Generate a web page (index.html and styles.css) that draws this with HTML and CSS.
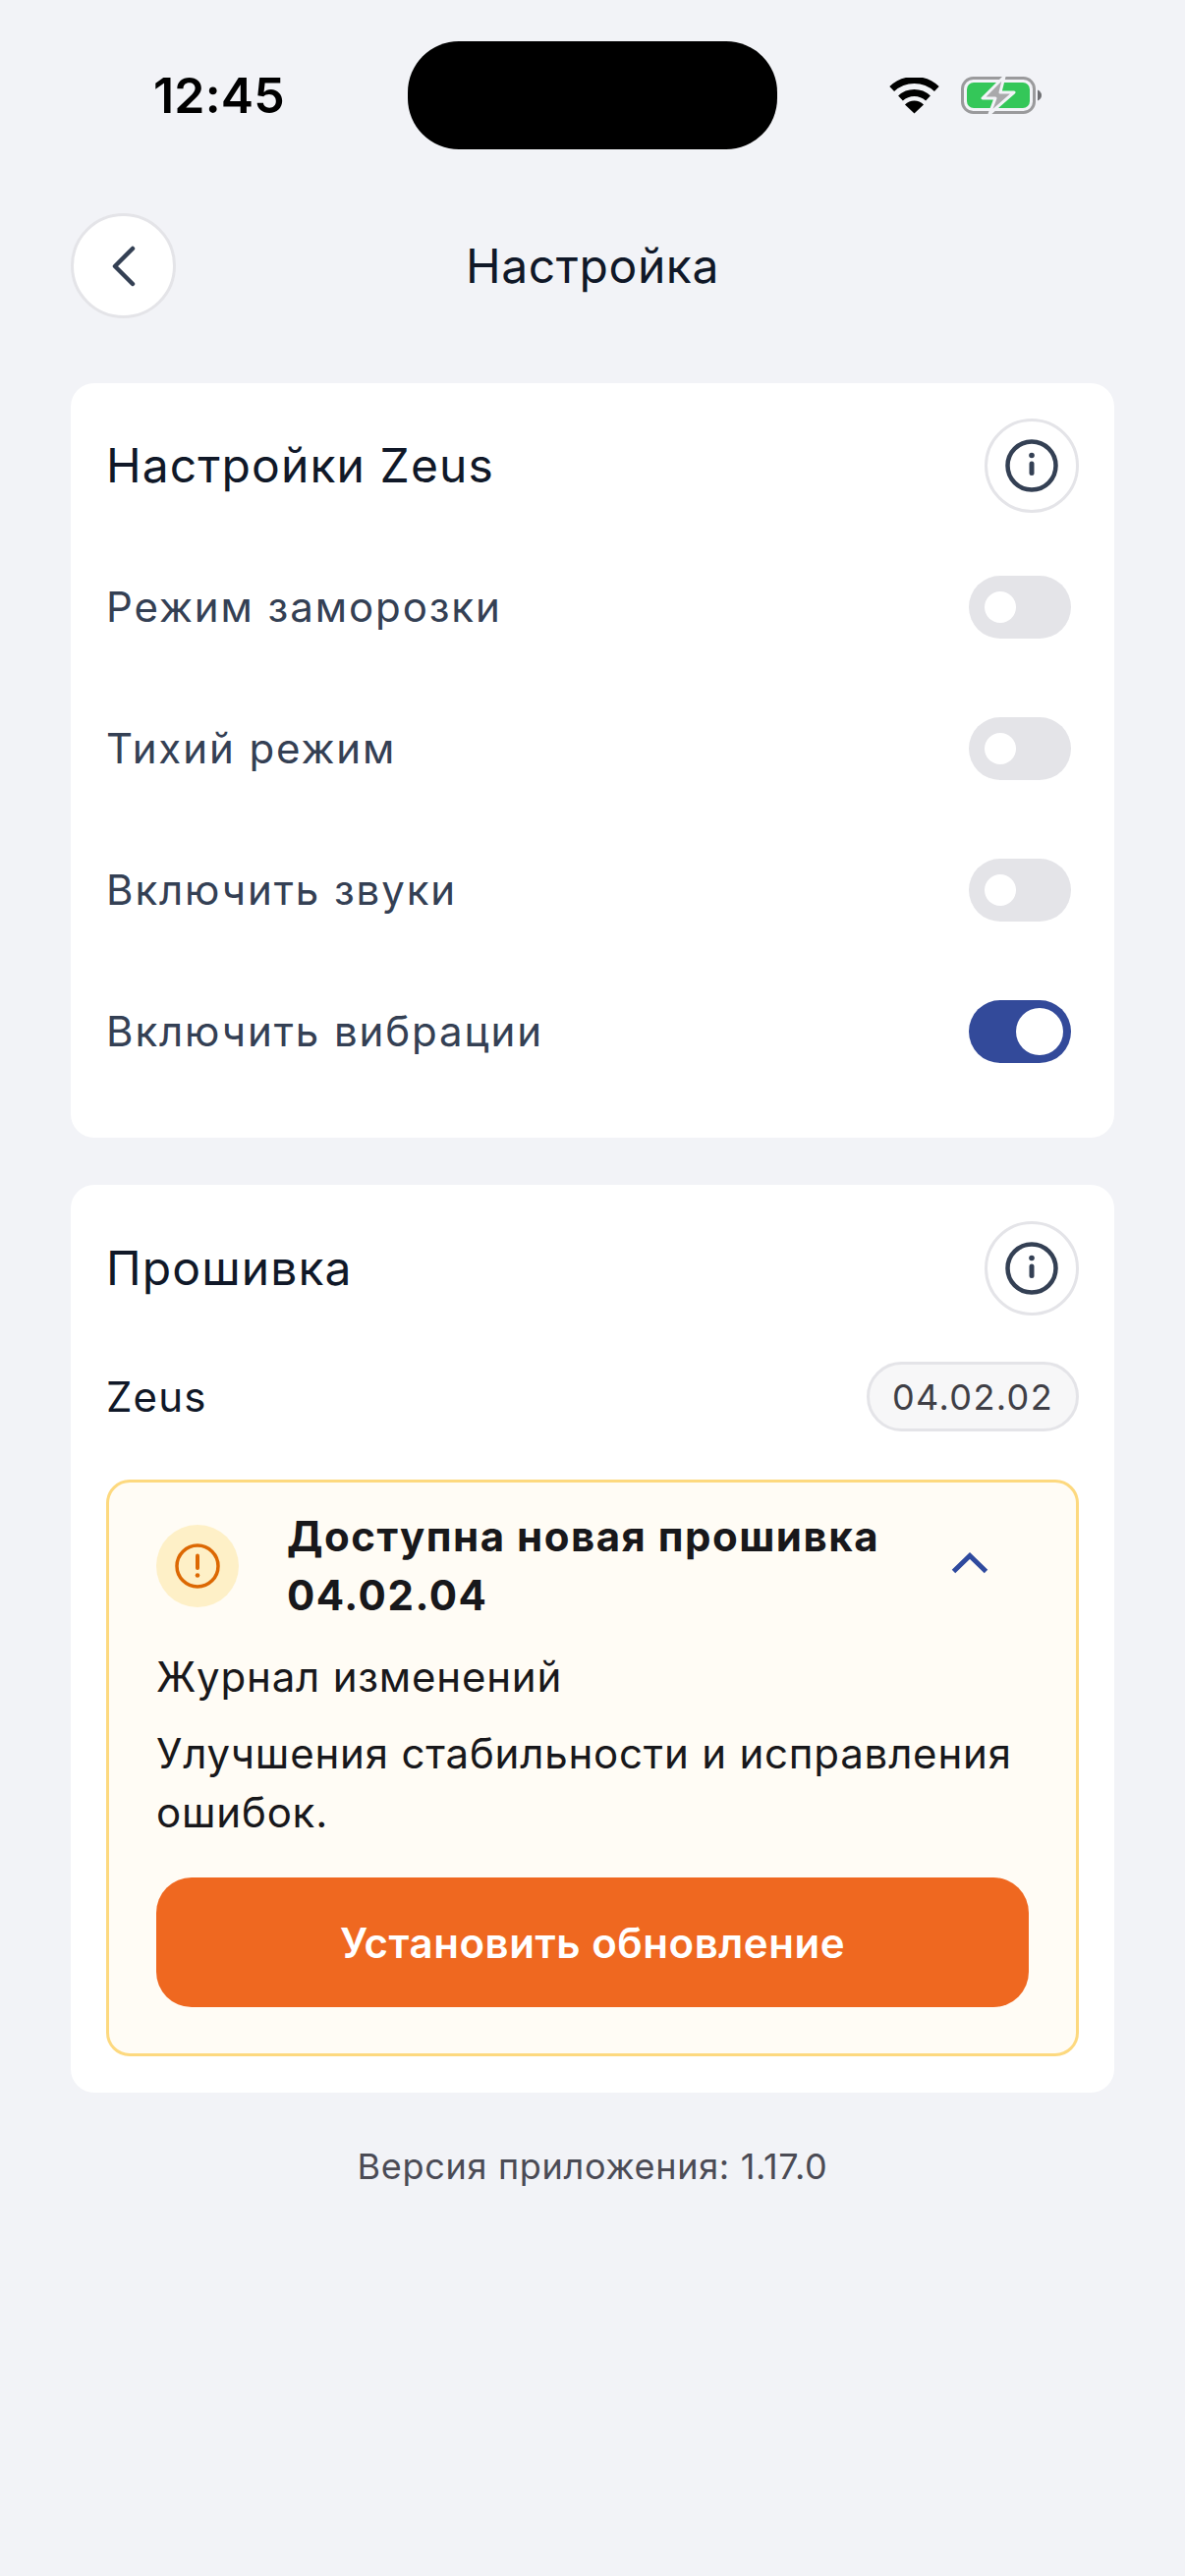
FILE: index.html
```html
<!DOCTYPE html>
<html lang="ru">
<head>
<meta charset="utf-8">
<title>Настройка</title>
<link rel="stylesheet" href="styles.css">
</head>
<body>
<div class="page">
  <div class="status">
    <div class="time">12:45</div>
    <div class="island"></div>
    <div class="status-icons">
      <svg class="wifi" width="51" height="37" viewBox="0 0 51 37"><path d="M2.7 11.5A33.5 33.5 0 0 1 48.3 11.5M11.5 21A20.5 20.5 0 0 1 39.5 21" fill="none" stroke="#000" stroke-width="7"/><path d="M25.5 36.5L16 27.5A13.5 13.5 0 0 1 35 27.5Z" fill="#000"/></svg>
      <svg class="battery" width="84" height="42" viewBox="0 0 84 42"><rect x="1.5" y="3.5" width="73" height="35" rx="11" fill="none" stroke="#9a9a9c" stroke-width="3"/><rect x="6" y="8" width="64" height="26" rx="7" fill="#34c759"/><path d="M78 15.5Q82 17.500 82 21T78 26.500Z" fill="#6f6f73"/><path d="M44 2L22 24H35L29 40L54 18H40Z" fill="#a9a9ab" stroke="#f2f3f7" stroke-width="3" stroke-linejoin="round"/></svg>
    </div>
  </div>

  <header class="nav">
    <button class="round-btn back" aria-label="Назад">
      <svg width="48" height="48" viewBox="0 0 48 48"><path d="M33 6L15 24L33 42" fill="none" stroke="#344054" stroke-width="4.500" stroke-linecap="round" stroke-linejoin="round"/></svg>
    </button>
    <h1 class="nav-title">Настройка</h1>
  </header>

  <section class="card card-settings">
    <div class="card-head">
      <h2 class="card-title">Настройки Zeus</h2>
      <button class="round-btn info" aria-label="Информация">
        <svg width="56" height="56" viewBox="0 0 56 56"><circle cx="28" cy="28" r="24.500" fill="none" stroke="#344054" stroke-width="4.500"/><circle cx="28" cy="17.500" r="2.800" fill="#344054"/><path d="M28 26V35.500" stroke="#344054" stroke-width="5" stroke-linecap="round"/></svg>
      </button>
    </div>
    <div class="rows">
      <div class="row"><span class="row-label">Режим заморозки</span><span class="toggle"><span class="knob"></span></span></div>
      <div class="row"><span class="row-label">Тихий режим</span><span class="toggle"><span class="knob"></span></span></div>
      <div class="row"><span class="row-label">Включить звуки</span><span class="toggle"><span class="knob"></span></span></div>
      <div class="row"><span class="row-label">Включить вибрации</span><span class="toggle on"><span class="knob"></span></span></div>
    </div>
  </section>

  <section class="card card-firmware">
    <div class="card-head">
      <h2 class="card-title">Прошивка</h2>
      <button class="round-btn info" aria-label="Информация">
        <svg width="56" height="56" viewBox="0 0 56 56"><circle cx="28" cy="28" r="24.500" fill="none" stroke="#344054" stroke-width="4.500"/><circle cx="28" cy="17.500" r="2.800" fill="#344054"/><path d="M28 26V35.500" stroke="#344054" stroke-width="5" stroke-linecap="round"/></svg>
      </button>
    </div>
    <div class="fw-row">
      <span class="fw-name">Zeus</span>
      <span class="pill">04.02.02</span>
    </div>
    <div class="update">
      <div class="update-head">
        <span class="alert-badge">
          <svg width="46" height="46" viewBox="0 0 46 46"><circle cx="23" cy="23" r="21" fill="none" stroke="#dc6803" stroke-width="3.500"/><path d="M23 12.500V25" stroke="#dc6803" stroke-width="4" stroke-linecap="round"/><circle cx="23" cy="32.500" r="2.300" fill="#dc6803"/></svg>
        </span>
        <div class="update-title">Доступна новая прошивка 04.02.04</div>
        <svg class="chevron" width="38" height="22" viewBox="0 0 38 22"><path d="M2.500 19.500L19 3.500L35.500 19.500" fill="none" stroke="#2f4a9e" stroke-width="5"/></svg>
      </div>
      <p class="update-sub">Журнал изменений</p>
      <p class="update-text">Улучшения стабильности и исправления ошибок.</p>
      <button class="install">Установить обновление</button>
    </div>
  </section>

  <p class="version">Версия приложения: 1.17.0</p>
</div>
</body>
</html>
```
FILE: styles.css
```css
* { box-sizing: border-box; }
html, body { margin: 0; padding: 0; }
body {
  width: 1206px;
  height: 2622px;
  background: #f2f3f7;
  font-family: Inter, "Noto Sans", sans-serif;
  color: #101828;
  overflow: hidden;
}
button { font-family: inherit; padding: 0; }
h1, h2, p { margin: 0; font-weight: 400; }

.page { display: flex; flex-direction: column; padding: 42px 72px 0; }

.status { display: flex; align-items: center; height: 110px; margin: 0 -72px; }
.time { width: 415px; padding-left: 156px; font-size: 50px; font-weight: 600; color: #000; letter-spacing: 0.2px; }
.island { width: 376px; height: 110px; border-radius: 52px; background: #000; }
.status-icons { display: flex; align-items: center; gap: 22px; padding-left: 114px; }
.wifi, .battery { display: block; }

.nav { position: relative; display: flex; align-items: center; justify-content: center; height: 107px; margin-top: 65px; }
.nav-title { font-size: 48px; font-weight: 400; letter-spacing: 0.6px; color: #101828; }
.round-btn {
  display: flex; align-items: center; justify-content: center;
  background: #fff; border: 3px solid #e4e4e8; border-radius: 50%; flex: none;
}
.back { position: absolute; left: 0; top: 0; width: 107px; height: 107px; }
.info { width: 96px; height: 96px; }

.card { background: #fff; border-radius: 24px; padding: 36px 36px 0; }
.card-settings { margin-top: 66px; height: 768px; }
.card-firmware { margin-top: 48px; height: 924px; padding-top: 37px; }
.card-head { display: flex; align-items: center; justify-content: space-between; }
.card-title { font-size: 48px; font-weight: 400; letter-spacing: 1.1px; padding-bottom: 2px; color: #101828; }

.rows { display: flex; flex-direction: column; gap: 80px; margin-top: 64px; }
.row { display: flex; align-items: center; justify-content: space-between; height: 64px; padding-right: 8px; }
.row-label { font-size: 42px; font-weight: 400; letter-spacing: 1.9px; padding-bottom: 2px; color: #344054; }
.toggle { display: flex; align-items: center; width: 104px; height: 64px; border-radius: 32px; background: #e4e4e8; padding-left: 16px; }
.knob { width: 32px; height: 32px; border-radius: 50%; background: #fff; }
.toggle.on { background: #334a9a; justify-content: flex-end; padding: 0 8px; }
.toggle.on .knob { width: 48px; height: 48px; }

.fw-row { display: flex; align-items: center; justify-content: space-between; margin-top: 47px; }
.fw-name { font-size: 42px; font-weight: 400; letter-spacing: 1.2px; color: #101828; }
.pill {
  display: flex; align-items: center; justify-content: center;
  width: 216px; height: 71px; border-radius: 36px;
  background: #f7f7f8; border: 3px solid #e4e4e8;
  font-size: 36px; letter-spacing: 1.4px; color: #3f3f46;
}

.update {
  margin-top: 49px; height: 587px; padding: 25px 48px 0;
  background: #fffcf5; border: 3px solid #fdd97f; border-radius: 24px;
  display: flex; flex-direction: column;
}
.update-head { display: flex; align-items: center; }
.alert-badge {
  display: flex; align-items: center; justify-content: center;
  width: 84px; height: 84px; border-radius: 50%; background: #fef0c7; flex: none; margin-right: 49px;
}
.update-title { width: 640px; flex: none; font-size: 42px; line-height: 60px; font-weight: 700; letter-spacing: 1.5px; color: #18181b; }
.chevron { flex: none; margin-left: 36px; margin-top: -6px; }
.update-sub { margin-top: 23px; font-size: 42px; line-height: 60px; letter-spacing: 0.8px; color: #18181b; }
.update-text { margin-top: 18px; font-size: 42px; line-height: 60px; letter-spacing: 0.8px; color: #18181b; }
.install {
  margin-top: 36px; height: 132px; border: 0; border-radius: 36px; background: #ef6820;
  color: #fff; font-size: 42px; font-weight: 600; letter-spacing: 0.55px;
}

.version { margin-top: 53px; text-align: center; font-size: 36px; letter-spacing: 0.7px; color: #4b4b55; }
```
